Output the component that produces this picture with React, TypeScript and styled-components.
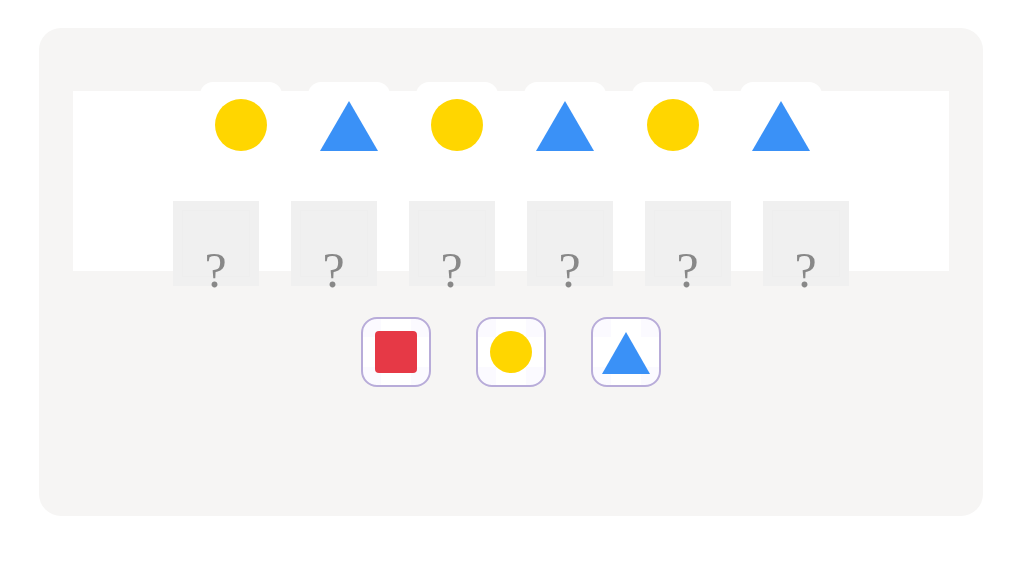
import React from "react";
import styled, { createGlobalStyle } from "styled-components";

const GlobalStyle = createGlobalStyle`
  html, body { margin: 0; padding: 0; background: #ffffff; }
  body { font-family: "Liberation Sans", Arial, sans-serif; }
`;

const Page = styled.div`
  padding: 28px 39px 50px;
  box-sizing: border-box;
  width: 1022px;
`;

const Panel = styled.div`
  background: #f6f5f4;
  border-radius: 22px;
  height: 488px;
  box-sizing: border-box;
  padding: 63px 34px 0;
`;

const Strip = styled.div`
  background: #ffffff;
  height: 180px;
  display: flex;
  flex-direction: column;
  align-items: center;
`;

const PatternRow = styled.div`
  display: flex;
  gap: 26px;
  margin-top: -9px;
`;

const PatternCard = styled.div`
  width: 82px;
  height: 86px;
  background: #ffffff;
  border-radius: 13px;
  display: flex;
  align-items: center;
  justify-content: center;
`;

const QuestionRow = styled.div`
  display: flex;
  gap: 32px;
  margin-top: 33px;
`;

const QuestionBox = styled.div`
  width: 86px;
  height: 85px;
  background: #f0f0f0;
  box-shadow: inset 0 0 0 9px #f0f0f0, inset 0 0 0 10px #eeeeee;
  display: flex;
  align-items: flex-end;
  justify-content: center;
  overflow: visible;
`;

const QMark = styled.span`
  font-family: "Liberation Serif", "Times New Roman", serif;
  font-size: 50px;
  line-height: 1;
  color: #888888;
  margin-bottom: -9px;
  margin-right: 1px;
`;

const ChoiceRow = styled.div`
  display: flex;
  justify-content: center;
  gap: 45px;
  margin-top: 46px;
`;

const ChoiceButton = styled.button`
  width: 70px;
  height: 70px;
  box-sizing: border-box;
  border: 2px solid #b8acd9;
  border-radius: 16px;
  padding: 0;
  cursor: pointer;
  display: flex;
  align-items: center;
  justify-content: center;
  background:
    linear-gradient(#fbfaff, #fbfaff) top left / 18px 18px no-repeat,
    linear-gradient(#fbfaff, #fbfaff) top right / 18px 18px no-repeat,
    linear-gradient(#fbfaff, #fbfaff) bottom left / 18px 18px no-repeat,
    linear-gradient(#fbfaff, #fbfaff) bottom right / 18px 18px no-repeat,
    #ffffff;
`;

const Circle = styled.div<{ $size: number }>`
  width: ${(p) => p.$size}px;
  height: ${(p) => p.$size}px;
  border-radius: 50%;
  background: #ffd600;
`;

const Square = styled.div`
  width: 42px;
  height: 42px;
  border-radius: 4px;
  background: #e63946;
`;

const Triangle: React.FC<{ w: number; h: number; nudge?: number }> = ({ w, h, nudge = 0 }) => (
  <svg width={w} height={h} viewBox={`0 0 ${w} ${h}`} style={{ display: "block", marginTop: nudge }}>
    <polygon points={`${w / 2},0 ${w},${h} 0,${h}`} fill="#3a91f7" />
  </svg>
);

const pattern = ["circle", "triangle", "circle", "triangle", "circle", "triangle"];

export default function App() {
  return (
    <>
      <GlobalStyle />
      <Page>
        <Panel>
          <Strip>
            <PatternRow>
              {pattern.map((s, i) => (
                <PatternCard key={i}>
                  {s === "circle" ? <Circle $size={52} /> : <Triangle w={58} h={50} nudge={2} />}
                </PatternCard>
              ))}
            </PatternRow>
            <QuestionRow>
              {pattern.map((_, i) => (
                <QuestionBox key={i}>
                  <QMark>?</QMark>
                </QuestionBox>
              ))}
            </QuestionRow>
          </Strip>
          <ChoiceRow>
            <ChoiceButton aria-label="square">
              <Square />
            </ChoiceButton>
            <ChoiceButton aria-label="circle">
              <Circle $size={42} />
            </ChoiceButton>
            <ChoiceButton aria-label="triangle">
              <Triangle w={48} h={42} nudge={1} />
            </ChoiceButton>
          </ChoiceRow>
        </Panel>
      </Page>
    </>
  );
}
